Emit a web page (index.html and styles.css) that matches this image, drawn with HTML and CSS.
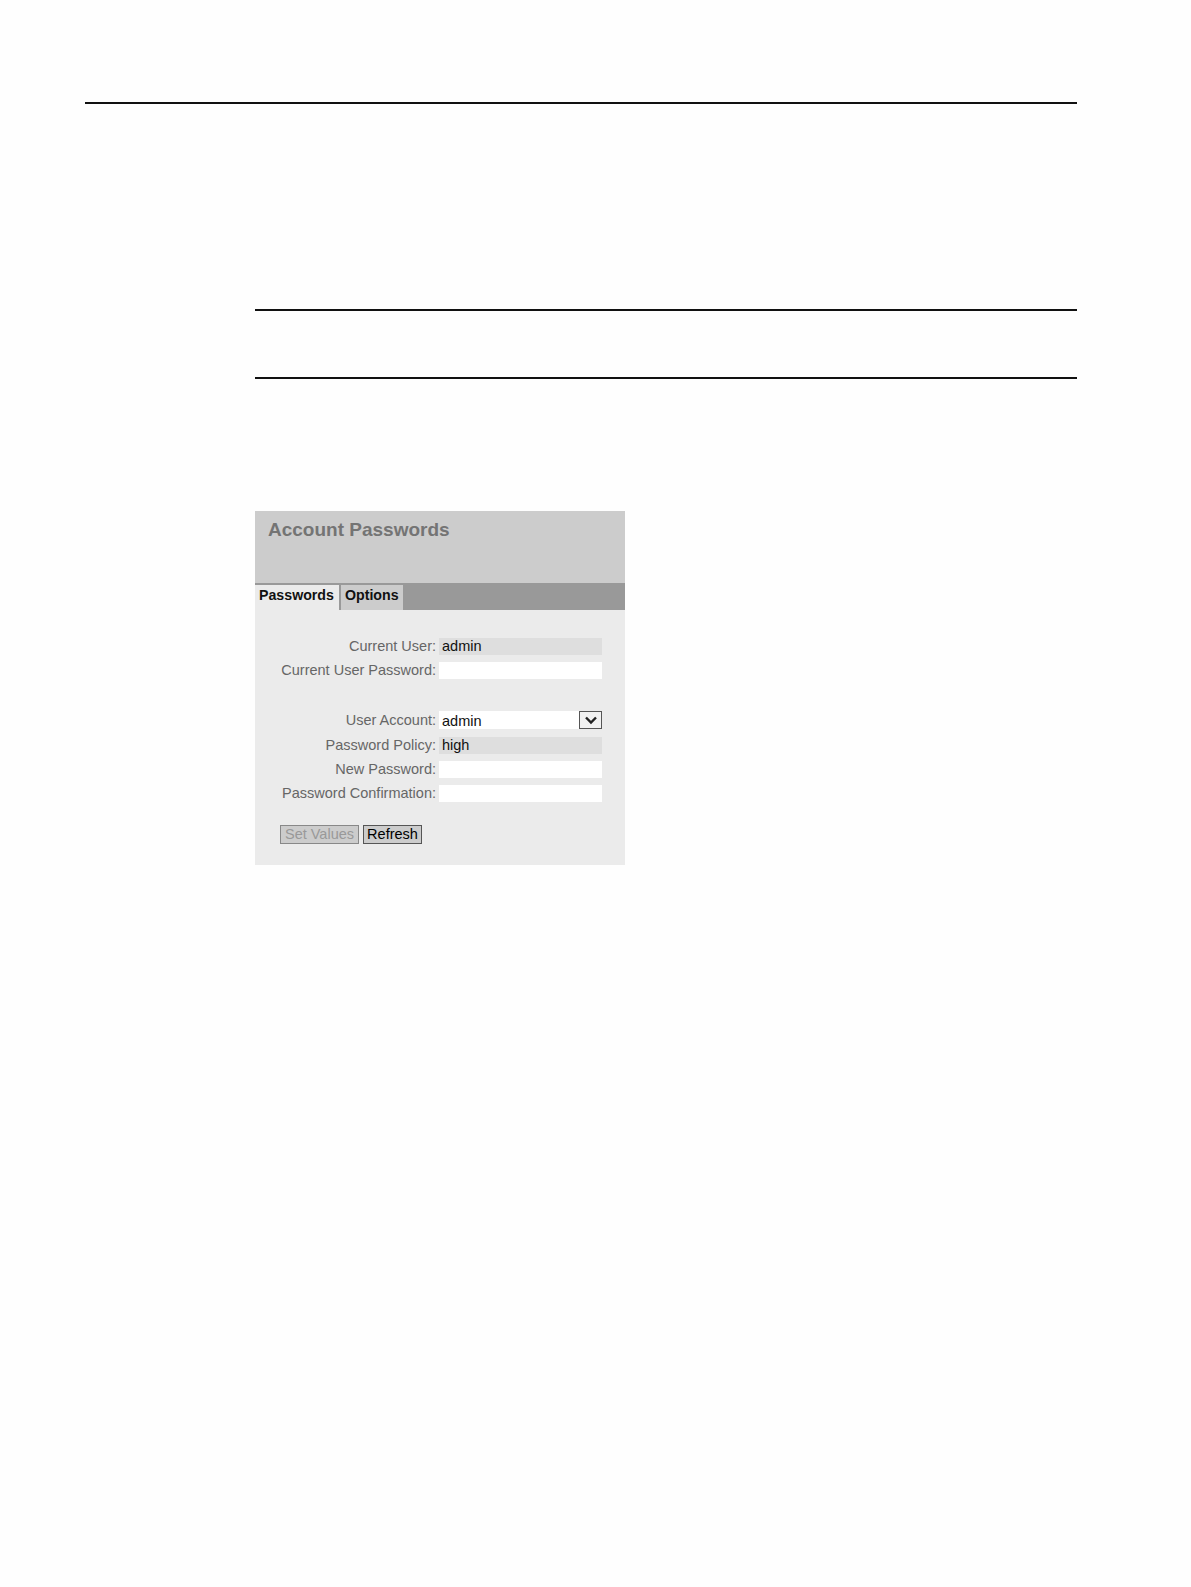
FILE: index.html
```html
<!DOCTYPE html>
<html>
<head>
<meta charset="utf-8">
<link rel="stylesheet" href="styles.css">
</head>
<body>
<div class="page">
  <hr class="rule-top">
  <div class="content">
    <div class="note">
      <hr class="rule">
      <div class="note-space"></div>
      <hr class="rule">
    </div>
    <div class="panel">
      <div class="panel-head">
        <h1 class="panel-title">Account Passwords</h1>
      </div>
      <div class="tabbar">
        <div class="tab tab-active">Passwords</div>
        <div class="tab tab-options">Options</div>
      </div>
      <div class="panel-body">
        <div class="form">
          <div class="label">Current User:</div>
          <div class="field field-ro">admin</div>
          <div class="label">Current User Password:</div>
          <div class="field field-in"></div>
          <div class="spacer"></div>
          <div class="label">User Account:</div>
          <div class="field field-select"><span>admin</span><span class="sel-btn"><svg width="14" height="10" viewBox="0 0 14 10"><path d="M2 2.5 L7 7.5 L12 2.5" fill="none" stroke="#222" stroke-width="2.4"/></svg></span></div>
          <div class="label">Password Policy:</div>
          <div class="field field-ro">high</div>
          <div class="label">New Password:</div>
          <div class="field field-in"></div>
          <div class="label">Password Confirmation:</div>
          <div class="field field-in"></div>
        </div>
        <div class="buttons">
          <span class="btn btn-disabled btn-set">Set Values</span>
          <span class="btn btn-refresh">Refresh</span>
        </div>
      </div>
    </div>
  </div>
</div>
</body>
</html>
```

FILE: styles.css
```css
html, body {
  margin: 0;
  padding: 0;
  background: #fefefe;
}
body {
  font-family: "Liberation Sans", Arial, sans-serif;
}
.page {
  padding: 102px 114px 0 85px;
}
.rule-top {
  margin: 0;
  border: 0;
  border-top: 2px solid #111;
  height: 0;
}
.content {
  padding-left: 170px;
}
.note {
  margin-top: 205px;
}
.rule {
  margin: 0;
  border: 0;
  border-top: 2px solid #111;
  height: 0;
}
.note-space {
  height: 66px;
}
.panel {
  margin-top: 132px;
  width: 370px;
  background: #ebebeb;
}
.panel-head {
  height: 72px;
  background: #cccccc;
  padding: 8px 0 0 13px;
  box-sizing: border-box;
}
.panel-title {
  margin: 0;
  font-size: 19px;
  font-weight: bold;
  color: #747474;
  line-height: 22px;
}
.tabbar {
  height: 27px;
  background: #999999;
  display: flex;
  align-items: flex-end;
  gap: 2px;
}
.tab {
  height: 25px;
  box-sizing: border-box;
  background: #cccccc;
  font-size: 14.2px;
  font-weight: bold;
  color: #111;
  padding: 0 0 0 4px;
  line-height: 20px;
}
.tab-active {
  background: #ebebeb;
  width: 84px;
}
.tab-options {
  width: 62px;
}
.panel-body {
  padding: 27.5px 0 21.5px 0;
}
.form {
  display: grid;
  grid-template-columns: 181px 163px;
  column-gap: 3px;
  row-gap: 7.4px;
  font-size: 14.5px;
}
.label {
  text-align: right;
  color: #666;
  line-height: 17px;
  height: 17px;
}
.field {
  height: 17px;
  line-height: 17px;
  padding-left: 3px;
  box-sizing: border-box;
  color: #111;
}
.field-ro {
  background: #dedede;
}
.field-in {
  background: #ffffff;
}
.spacer {
  grid-column: 1 / 3;
  height: 18px;
}
.field-select {
  background: #fff;
  display: flex;
  justify-content: space-between;
  align-items: center;
  height: 18px;
  line-height: 18px;
  margin-top: -0.5px;
  padding-top: 2px;
}
.sel-btn {
  width: 23px;
  height: 18px;
  border: 1px solid #555;
  background: #f2f2f2;
  display: flex;
  align-items: center;
  justify-content: center;
  box-sizing: border-box;
  margin-top: -2px;
}
.buttons {
  display: flex;
  gap: 4px;
  padding-left: 25px;
  margin-top: 22.5px;
}
.btn {
  font-size: 14.5px;
  line-height: 17px;
  height: 19px;
  box-sizing: border-box;
  text-align: center;
  border: 1px solid #555;
  background: #cccccc;
  color: #000;
}
.btn-set {
  width: 79px;
}
.btn-refresh {
  width: 59px;
}
.btn-disabled {
  color: #999;
  border-color: #888;
}
```
